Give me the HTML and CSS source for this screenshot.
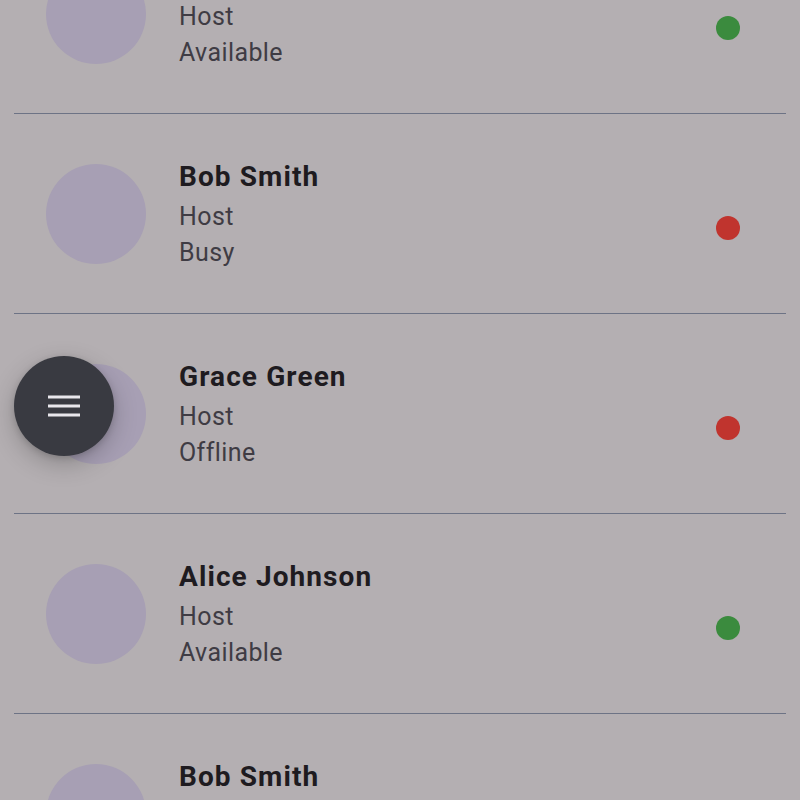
FILE: index.html
```html
<!DOCTYPE html>
<html>
<head>
<meta charset="utf-8">
<link rel="stylesheet" href="styles.css">
</head>
<body>
<div class="screen">
  <ul class="list">
    <li class="row">
      <div class="avatar"></div>
      <div class="info">
        <div class="name">Alice Johnson</div>
        <div class="sub">Host</div>
        <div class="sub">Available</div>
      </div>
      <span class="dot green"></span>
    </li>
    <li class="row">
      <div class="avatar"></div>
      <div class="info">
        <div class="name">Bob Smith</div>
        <div class="sub">Host</div>
        <div class="sub">Busy</div>
      </div>
      <span class="dot red"></span>
    </li>
    <li class="row">
      <div class="avatar"></div>
      <div class="info">
        <div class="name">Grace Green</div>
        <div class="sub">Host</div>
        <div class="sub">Offline</div>
      </div>
      <span class="dot red"></span>
    </li>
    <li class="row">
      <div class="avatar"></div>
      <div class="info">
        <div class="name">Alice Johnson</div>
        <div class="sub">Host</div>
        <div class="sub">Available</div>
      </div>
      <span class="dot green"></span>
    </li>
    <li class="row">
      <div class="avatar"></div>
      <div class="info">
        <div class="name">Bob Smith</div>
        <div class="sub">Host</div>
        <div class="sub">Busy</div>
      </div>
      <span class="dot red"></span>
    </li>
  </ul>
  <button class="fab" aria-label="Menu">
    <svg width="32" height="24" viewBox="0 0 32 24">
      <rect x="0" y="1.5" width="32" height="3" fill="#e9e7ec"/>
      <rect x="0" y="10.5" width="32" height="3" fill="#e9e7ec"/>
      <rect x="0" y="19.5" width="32" height="3" fill="#e9e7ec"/>
    </svg>
  </button>
</div>
</body>
</html>
```

FILE: styles.css
```css
html, body {
  margin: 0;
  padding: 0;
  background: #b4afb2;
  font-family: Roboto, "Liberation Sans", sans-serif;
}
.screen {
  position: relative;
  width: 800px;
  height: 800px;
  overflow: hidden;
  background: #b4afb2;
}
.list {
  list-style: none;
  margin: -86px 14px 0 14px;
  padding: 0;
}
.row {
  height: 199px;
  border-bottom: 1px solid #6d7385;
  display: flex;
  align-items: center;
  padding: 0 46px 0 32px;
}
.avatar {
  width: 100px;
  height: 100px;
  border-radius: 50%;
  background: #a79fb4;
  flex: none;
}
.info {
  flex: 1;
  margin-left: 33px;
}
.name {
  font-size: 28px;
  font-weight: 700;
  line-height: 40px;
  margin-bottom: 2px;
  color: #1e1b20;
  letter-spacing: 1.1px;
}
.sub {
  font-size: 25px;
  line-height: 36px;
  color: #3f3c44;
  letter-spacing: 0.4px;
}
.dot {
  width: 24px;
  height: 24px;
  border-radius: 50%;
  flex: none;
  margin-top: 29px;
}
.green { background: #3b8b3e; }
.red { background: #c0342e; }
.fab {
  position: absolute;
  left: 14px;
  top: 356px;
  width: 100px;
  height: 100px;
  border-radius: 50%;
  border: none;
  padding: 0;
  background: #393a41;
  display: flex;
  align-items: center;
  justify-content: center;
  box-shadow: 0 8px 24px rgba(0,0,0,0.22), 0 2px 6px rgba(0,0,0,0.15);
}
.fab svg { display: block; }
```
